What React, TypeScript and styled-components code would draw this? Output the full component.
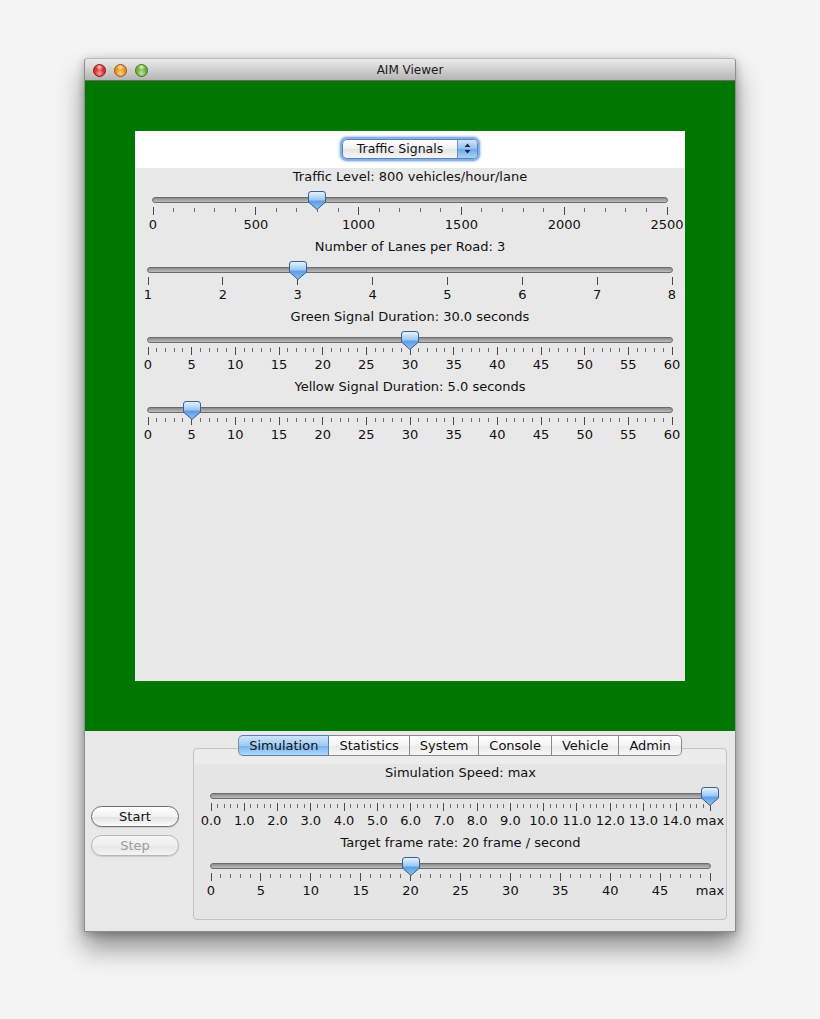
import React, { FC, useId } from "react";
import styled, { createGlobalStyle, css } from "styled-components";

const GlobalStyle = createGlobalStyle`
  html, body {
    margin: 0;
    padding: 0;
    background: #f4f4f4;
  }
  body {
    font-family: "DejaVu Sans", "Liberation Sans", sans-serif;
    font-size: 13px;
    color: #111111;
  }
`;

const Page = styled.div`
  padding: 58px 0 80px 84px;
`;

const Window = styled.div`
  width: 650px;
  border: 1px solid #8e8e8e;
  border-top-color: #b8b8b8;
  border-radius: 4px 4px 0 0;
  background: #e8e8e8;
  box-shadow: 0 16px 26px rgba(0, 0, 0, 0.42), 0 2px 8px rgba(0, 0, 0, 0.25);
`;

const TitleBar = styled.div`
  height: 21px;
  display: grid;
  grid-template-columns: 1fr auto 1fr;
  align-items: center;
  padding: 0 8px;
  border-bottom: 1px solid #6a6a6a;
  border-radius: 4px 4px 0 0;
  background: linear-gradient(#ececec, #d6d6d6 40%, #b4b4b4);
`;

const Lights = styled.div`
  display: flex;
  gap: 8px;
`;

const Light = styled.span<{ $tone: string; $edge: string }>`
  width: 13px;
  height: 13px;
  border-radius: 50%;
  box-sizing: border-box;
  border: 1px solid ${(p) => p.$edge};
  background: radial-gradient(circle at 50% 75%, #ffffff99 0%, transparent 45%),
    radial-gradient(circle at 50% 20%, #ffffffcc 0%, transparent 35%),
    ${(p) => p.$tone};
`;

const Title = styled.span`
  font-size: 12px;
  line-height: 22px;
  color: #1a1a1a;
`;

const Stage = styled.div`
  background: #007700;
  padding: 50px;
`;

const Panel = styled.div`
  width: 550px;
  height: 550px;
  background: #e8e8e8;
  display: flex;
  flex-direction: column;
`;

const PanelHeader = styled.div`
  height: 35px;
  padding-bottom: 2px;
  background: #ffffff;
  display: flex;
  align-items: center;
  justify-content: center;
`;

const Combo = styled.div`
  width: 134px;
  height: 18px;
  display: flex;
  border: 1px solid #5d7fb8;
  border-radius: 5px;
  box-shadow: 0 0 0 2px #86b1e6, 0 0 2px 3px #b9d3f2;
  overflow: hidden;
  background: linear-gradient(#ffffff, #f1f1f1 50%, #e4e4e4 51%, #f6f6f6);
`;

const ComboText = styled.span`
  flex: 1;
  line-height: 18px;
  text-align: center;
  font-size: 12.5px;
`;

const ComboArrows = styled.span`
  width: 19px;
  display: flex;
  align-items: center;
  justify-content: center;
  border-left: 1px solid #6d8fc6;
  background: linear-gradient(#d2e6fa, #8fc0f1 50%, #6eaaec 51%, #a9d2f7);
`;

const SliderList = styled.div`
  display: flex;
  flex-direction: column;
  padding-top: 1px;
`;

const SliderBlock = styled.div<{ $left: number; $right: number }>`
  height: 70px;
  padding: 0 ${(p) => p.$right}px 0 ${(p) => p.$left}px;
  display: flex;
  flex-direction: column;
`;

const SliderLabel = styled.div`
  height: 16px;
  line-height: 16px;
  text-align: center;
  white-space: nowrap;
`;

const Rail = styled.div`
  position: relative;
  height: 22px;
`;

const Track = styled.div`
  position: absolute;
  left: -1px;
  right: -1px;
  top: 12px;
  height: 6px;
  border-radius: 3px;
  box-sizing: border-box;
  border: 1px solid #6c6c6c;
  background: linear-gradient(#8a8a8a, #a9a9a9 60%, #bdbdbd);
`;

const Thumb = styled.svg`
  position: absolute;
  top: 6px;
  width: 18px;
  height: 19px;
  transform: translateX(-50%);
`;

const Ticks = styled.svg`
  display: block;
  width: 100%;
  height: 9px;
  overflow: visible;
`;

const Numbers = styled.div`
  position: relative;
  height: 14px;
  margin-top: 2px;
`;

const Num = styled.span`
  position: absolute;
  top: 0;
  line-height: 14px;
  transform: translateX(-50%);
  white-space: nowrap;
`;

type SliderProps = {
  label: string;
  divisions: number;
  subdivisions: number;
  position: number;
  labels: string[];
  left: number;
  right: number;
};

const Slider: FC<SliderProps> = ({
  label,
  divisions,
  subdivisions,
  position,
  labels,
  left,
  right,
}) => {
  const gid = useId().replace(/:/g, "");
  const total = divisions * subdivisions;
  const ticks = Array.from({ length: total + 1 }, (_, i) => i);
  return (
    <SliderBlock $left={left} $right={right}>
      <SliderLabel>{label}</SliderLabel>
      <Rail>
        <Track />
        <Thumb viewBox="0 0 18 19" style={{ left: `${position * 100}%` }}>
          <defs>
            <linearGradient id={gid} x1="0" y1="0" x2="0" y2="1">
              <stop offset="0" stopColor="#eaf3fd" />
              <stop offset="0.45" stopColor="#9ccaf5" />
              <stop offset="0.55" stopColor="#5e9fe6" />
              <stop offset="1" stopColor="#8cc2f3" />
            </linearGradient>
          </defs>
          <path
            d="M3 0.5 H15 Q17.5 0.5 17.5 3 V11 L9 18.5 L0.5 11 V3 Q0.5 0.5 3 0.5 Z"
            fill={`url(#${gid})`}
            stroke="#3f5f92"
          />
        </Thumb>
      </Rail>
      <Ticks>
        {ticks.map((i) => {
          const major = i % subdivisions === 0;
          const x = `${(i / total) * 100}%`;
          return (
            <line
              key={i}
              x1={x}
              x2={x}
              y1={major ? 0 : 1}
              y2={major ? 8 : 5}
              stroke={major ? "#4a4a4a" : "#6a6a6a"}
              strokeWidth="1"
              shapeRendering="crispEdges"
            />
          );
        })}
      </Ticks>
      <Numbers>
        {labels.map((t, i) => (
          <Num key={t} style={{ left: `${(i / divisions) * 100}%` }}>
            {t}
          </Num>
        ))}
      </Numbers>
    </SliderBlock>
  );
};

const ControlBar = styled.div`
  display: flex;
  align-items: center;
  padding: 4px 8px 11px 6px;
`;

const ButtonColumn = styled.div`
  width: 88px;
  display: flex;
  flex-direction: column;
  gap: 8px;
  margin: 6px 14px 0 0;
`;

const PushButton = styled.div<{ $disabled?: boolean }>`
  height: 19px;
  line-height: 19px;
  text-align: center;
  border-radius: 11px;
  border: 1px solid #6f6f6f;
  background: linear-gradient(#ffffff, #f2f2f2 50%, #e2e2e2 51%, #fbfbfb);
  box-shadow: 0 1px 1px rgba(0, 0, 0, 0.12);
  ${(p) =>
    p.$disabled &&
    css`
      border-color: #b5b5b5;
      color: #9c9c9c;
      background: linear-gradient(#f6f6f6, #eeeeee 50%, #e6e6e6 51%, #f3f3f3);
    `}
`;

const TabbedPane = styled.div`
  width: 534px;
  display: flex;
  flex-direction: column;
`;

const TabStrip = styled.div`
  display: flex;
  justify-content: center;
  position: relative;
  z-index: 1;
  margin-bottom: -8px;
`;

const Tab = styled.div<{ $selected?: boolean }>`
  height: 19px;
  line-height: 19px;
  padding: 0 10px;
  border: 1px solid #8a8a8a;
  border-left: none;
  background: linear-gradient(#ffffff, #f4f4f4 50%, #e9e9e9 51%, #f7f7f7);
  &:first-child {
    border-left: 1px solid #8a8a8a;
    border-radius: 5px 0 0 5px;
  }
  &:last-child {
    border-radius: 0 5px 5px 0;
  }
  ${(p) =>
    p.$selected &&
    css`
      border-color: #5a7fb6;
      background: linear-gradient(#cfe4fa, #9fcbf5 50%, #74b2ef 51%, #b2d8f8);
    `}
`;

const TabBox = styled.div`
  height: 154px;
  border: 1px solid #c4c4c4;
  border-radius: 4px;
  padding-top: 16px;
  box-sizing: content-box;
  background: linear-gradient(#ececec, #ececec 14px, #e5e5e5 16px, #e5e5e5);
`;

const traffic = ["0", "500", "1000", "1500", "2000", "2500"];
const lanes = ["1", "2", "3", "4", "5", "6", "7", "8"];
const seconds = Array.from({ length: 13 }, (_, i) => String(i * 5));
const speeds = [...Array.from({ length: 15 }, (_, i) => `${i}.0`), "max"];
const frames = [...Array.from({ length: 10 }, (_, i) => String(i * 5)), "max"];
const tabs = ["Simulation", "Statistics", "System", "Console", "Vehicle", "Admin"];

export default function App() {
  return (
    <>
      <GlobalStyle />
      <Page>
        <Window>
          <TitleBar>
            <Lights>
              <Light $tone="#e0302c" $edge="#8e1a16" />
              <Light $tone="#e9951c" $edge="#99580e" />
              <Light $tone="#6fb43a" $edge="#3e7a1c" />
            </Lights>
            <Title>AIM Viewer</Title>
            <span />
          </TitleBar>
          <Stage>
            <Panel>
              <PanelHeader>
                <Combo>
                  <ComboText>Traffic Signals</ComboText>
                  <ComboArrows>
                    <svg width="7" height="11" viewBox="0 0 7 11">
                      <path d="M3.5 0.5 L6.5 4 H0.5 Z M3.5 10.5 L6.5 7 H0.5 Z" fill="#1c2a44" />
                    </svg>
                  </ComboArrows>
                </Combo>
              </PanelHeader>
              <SliderList>
                <Slider
                  label="Traffic Level: 800 vehicles/hour/lane"
                  divisions={5}
                  subdivisions={5}
                  position={800 / 2500}
                  labels={traffic}
                  left={18}
                  right={18}
                />
                <Slider
                  label="Number of Lanes per Road: 3"
                  divisions={7}
                  subdivisions={1}
                  position={2 / 7}
                  labels={lanes}
                  left={13}
                  right={13}
                />
                <Slider
                  label="Green Signal Duration: 30.0 seconds"
                  divisions={12}
                  subdivisions={5}
                  position={30 / 60}
                  labels={seconds}
                  left={13}
                  right={13}
                />
                <Slider
                  label="Yellow Signal Duration: 5.0 seconds"
                  divisions={12}
                  subdivisions={5}
                  position={5 / 60}
                  labels={seconds}
                  left={13}
                  right={13}
                />
              </SliderList>
            </Panel>
          </Stage>
          <ControlBar>
            <ButtonColumn>
              <PushButton>Start</PushButton>
              <PushButton $disabled>Step</PushButton>
            </ButtonColumn>
            <TabbedPane>
              <TabStrip>
                {tabs.map((t) => (
                  <Tab key={t} $selected={t === "Simulation"}>
                    {t}
                  </Tab>
                ))}
              </TabStrip>
              <TabBox>
                <Slider
                  label="Simulation Speed: max"
                  divisions={15}
                  subdivisions={5}
                  position={1}
                  labels={speeds}
                  left={17}
                  right={16}
                />
                <Slider
                  label="Target frame rate: 20 frame / second"
                  divisions={10}
                  subdivisions={5}
                  position={20 / 50}
                  labels={frames}
                  left={17}
                  right={16}
                />
              </TabBox>
            </TabbedPane>
          </ControlBar>
        </Window>
      </Page>
    </>
  );
}
